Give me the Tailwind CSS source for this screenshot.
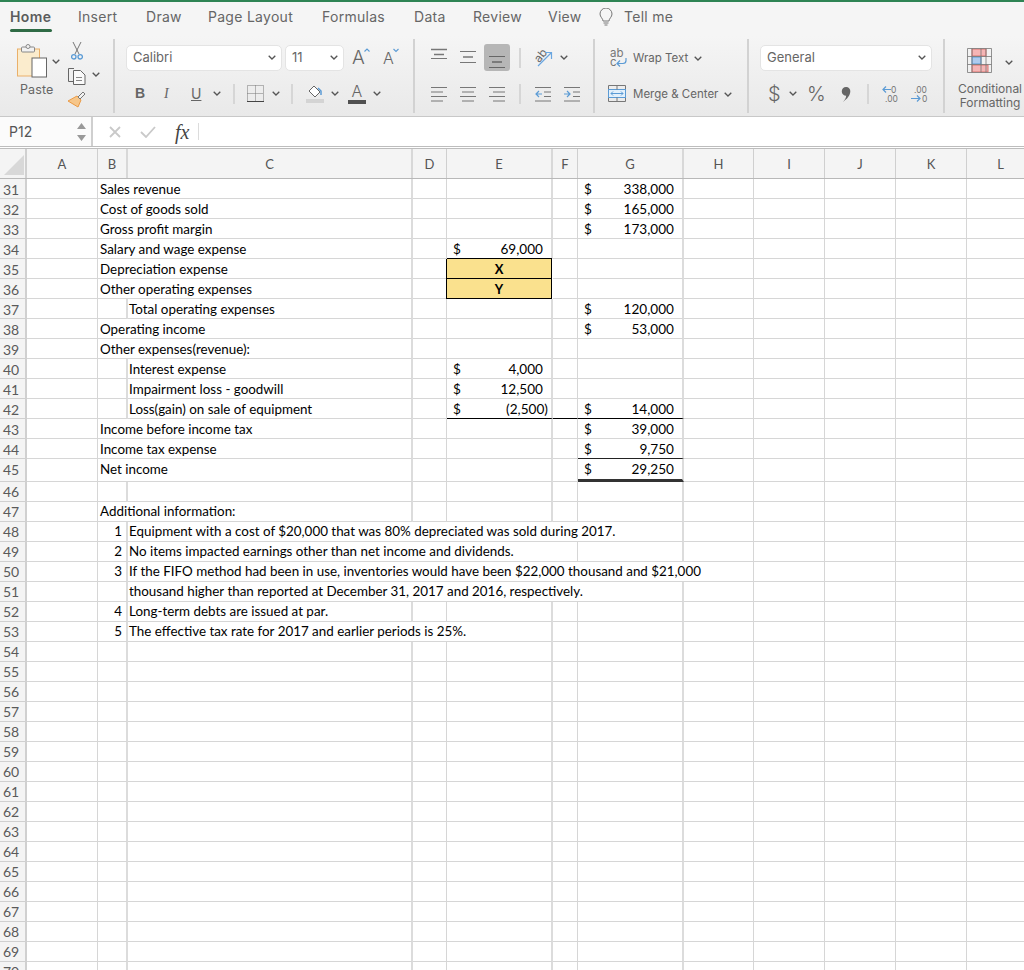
<!DOCTYPE html>
<html lang="en">
<head>
    <meta charset="UTF-8">
    <meta name="viewport" content="width=device-width, initial-scale=1.0">
    <title>Excel - Home</title>
    <script src="https://cdn.jsdelivr.net/npm/@tailwindcss/browser@4"></script>
</head>
<body class="bg-white">
<svg class="hidden">
    <symbol id="chev" viewBox="0 0 8 5"><polyline points="0.7,0.7 4,4 7.3,0.7" fill="none" stroke="#555" stroke-width="1.3"/></symbol>
</svg>
<div class="w-[1024px] h-[970px] overflow-hidden font-[Inter,sans-serif] text-[#666]">
    <div class="h-[2px] bg-[#2e8454]"></div>

    <!-- Tabs -->
    <div class="flex h-[34px] pt-[5px] bg-[#f5f5f5] text-[14px] leading-[20px] tracking-[0.02em]">
        <div class="ml-[10px] w-[42px]">
            <div class="font-semibold text-[#5c5c5c] tracking-[0.03em]">Home</div>
            <div class="mt-[2px] h-[3px] rounded-sm bg-[#2f6b45]"></div>
        </div>
        <div class="ml-[26px] w-[40px]">Insert</div>
        <div class="ml-[28px] w-[36px]">Draw</div>
        <div class="ml-[26px] w-[85px]">Page Layout</div>
        <div class="ml-[29px] w-[63px]">Formulas</div>
        <div class="ml-[29px] w-[32px]">Data</div>
        <div class="ml-[27px] w-[48px]">Review</div>
        <div class="ml-[27px] w-[33px]">View</div>
        <svg class="ml-[17px] mt-[1px]" width="16" height="19" viewBox="0 0 16 19" fill="none" stroke="#777" stroke-width="1"><path d="M5 13c0-2.500-3-4-3-7a6 6 0 0 1 12 0c0 3-3 4.500-3 7z"/><path d="M5.500 15h5M6.500 17h3"/></svg>
        <div class="ml-[10px] w-[50px]">Tell me</div>
    </div>

    <!-- Ribbon -->
    <div class="flex h-[81px] py-[3px] border-b border-[#c8c8c8] bg-gradient-to-b from-[#f5f5f5] to-[#e9e9e9] text-[13px]">
        <!-- Clipboard -->
        <div class="relative w-[115px] border-r-2 border-[#d2d2d2]">
            <svg class="absolute left-[17px] top-[5px]" width="30" height="34" viewBox="0 0 30 34" fill="none">
                <rect x="0.500" y="5" width="22" height="27" fill="#fbeccd" stroke="#eab06a"/>
                <rect x="4.500" y="3" width="13" height="5" rx="1" fill="#f2f2f2" stroke="#888"/>
                <circle cx="11" cy="2.500" r="2" fill="#f2f2f2" stroke="#888"/>
                <rect x="15" y="14" width="14.500" height="19" fill="#fff" stroke="#666"/>
            </svg>
            <svg class="absolute left-[52px] top-[20px] w-[8px] h-[5px]"><use href="#chev"/></svg>
            <div class="absolute left-[20px] top-[42px] text-[12.500px] leading-[18px] tracking-[0.01em]">Paste</div>
            <svg class="absolute left-[71px] top-[3px]" width="12" height="18" viewBox="0 0 12 18" fill="none">
                <path d="M2 0l6 12M10 0L4 12" stroke="#777"/>
                <circle cx="2.800" cy="14.800" r="2.200" stroke="#5b9bd5" stroke-width="1.300"/>
                <circle cx="9.200" cy="14.800" r="2.200" stroke="#5b9bd5" stroke-width="1.300"/>
            </svg>
            <svg class="absolute left-[68px] top-[28px]" width="18" height="18" viewBox="0 0 18 18" fill="none" stroke="#666">
                <path d="M6 1.500H.500v13H5"/>
                <path d="M5.500 3.500h7l4.500 4.500v9.500H5.500z" fill="#fafafa"/>
                <path d="M8 10.500h6M8 13.500h6" stroke="#888"/>
            </svg>
            <svg class="absolute left-[92px] top-[33px] w-[8px] h-[5px]"><use href="#chev"/></svg>
            <svg class="absolute left-[68px] top-[52px]" width="18" height="17" viewBox="0 0 18 17" fill="none">
                <path d="M9 5l4 4-3 7-10-6z" fill="#f6c68a" stroke="#ea9a45"/>
                <path d="M10 6l5-5 2 2-5 5z" fill="#f2f2f2" stroke="#777"/>
            </svg>
        </div>

        <!-- Font -->
        <div class="w-[300px] pt-[5px] border-r-2 border-[#d2d2d2]">
            <div class="flex items-center h-[27px]">
                <div class="ml-[11px] w-[156px] h-[26px] rounded-[5px] bg-white border border-[#e4e4e4] flex items-center justify-between pl-[6px] pr-[5px] text-[13px]">Calibri<svg class="w-[8px] h-[5px]"><use href="#chev"/></svg></div>
                <div class="ml-[3px] w-[59px] h-[26px] rounded-[5px] bg-white border border-[#e4e4e4] flex items-center justify-between pl-[6px] pr-[5px] text-[13px]">11<svg class="w-[8px] h-[5px]"><use href="#chev"/></svg></div>
                <div class="ml-[8px] w-[18px] relative text-[19px] leading-[20px] font-light">A<svg class="absolute left-[12px] top-[0px] w-[6px] h-[4px] overflow-visible" viewBox="0 0 6 4" fill="none" stroke="#5b9bd5" stroke-width="1.100"><path d="M.500 3.500L3 1l2.500 2.500"/></svg></div>
                <div class="ml-[13px] w-[15px] relative text-[16px] leading-[20px] font-light">A<svg class="absolute left-[10px] top-[0px] w-[6px] h-[4px] overflow-visible" viewBox="0 0 6 4" fill="none" stroke="#5b9bd5" stroke-width="1.100"><path d="M.500 1L3 3.500 5.500 1"/></svg></div>
            </div>
            <div class="flex items-center h-[27px] mt-[9px]">
                <div class="ml-[20px] w-[10px] font-bold text-[14px] font-['Liberation_Sans',sans-serif]">B</div>
                <div class="ml-[19px] w-[10px] italic text-[14px] font-['Liberation_Serif',serif]">I</div>
                <div class="ml-[17px] w-[10px] underline text-[14px]">U</div>
                <svg class="ml-[12px] w-[8px] h-[5px]"><use href="#chev"/></svg>
                <div class="ml-[12px] w-[2px] h-[20px] bg-[#d6d6d6]"></div>
                <svg class="ml-[12px]" width="17" height="17" viewBox="0 0 17 17" fill="none" stroke="#777">
                    <path d="M.500.500h16v16h-16z" stroke-dasharray="1 1"/>
                    <path d="M8.500.500v16M.500 8.500h16" stroke-dasharray="1 1"/>
                    <path d="M0 16.500h17" stroke="#444"/>
                </svg>
                <svg class="ml-[8px] w-[8px] h-[5px]"><use href="#chev"/></svg>
                <div class="ml-[11px] w-[2px] h-[20px] bg-[#d6d6d6]"></div>
                <svg class="ml-[13px]" width="18" height="18" viewBox="0 0 18 18" fill="none">
                    <path d="M8 1l6 6-5 5-6-6z" fill="#fff" stroke="#666"/>
                    <path d="M12 3l3 3 0 4" stroke="#5b9bd5" stroke-width="1.500"/>
                    <rect x="0" y="14" width="18" height="4" fill="#d4d4d4"/>
                </svg>
                <svg class="ml-[7px] w-[8px] h-[5px]"><use href="#chev"/></svg>
                <div class="ml-[9px] w-[18px] h-[20px] relative text-center text-[16px] leading-[15px] font-light">A<div class="absolute left-0 right-0 bottom-0 h-[4px] bg-[#505050]"></div></div>
                <svg class="ml-[7px] w-[8px] h-[5px]"><use href="#chev"/></svg>
            </div>
        </div>

        <!-- Alignment -->
        <div class="w-[180px] pt-[5px] border-r-2 border-[#d2d2d2]">
            <div class="flex items-center h-[27px]">
                <svg class="ml-[16px]" width="16" height="27" viewBox="0 0 16 27" stroke="#777"><path d="M0 5.500h16M3 10.500h10" stroke-width="1.500"/><path d="M0 14.500h16"/></svg>
                <svg class="ml-[13px]" width="16" height="27" viewBox="0 0 16 27" stroke="#777"><path d="M0 7.500h16"/><path d="M3 13h10" stroke-width="1.500"/><path d="M0 18.500h16"/></svg>
                <div class="ml-[8px] w-[26px] h-[27px] rounded-[3px] bg-[#b6b6b6] flex justify-center">
                    <svg width="16" height="27" viewBox="0 0 16 27" stroke="#666"><path d="M0 12.500h16"/><path d="M3 18h10" stroke-width="1.500"/><path d="M0 23.500h16"/></svg>
                </div>
                <div class="ml-[9px] w-[2px] h-[20px] bg-[#d6d6d6]"></div>
                <svg class="ml-[13px] overflow-visible" width="19" height="20" viewBox="0 0 19 20" fill="none">
                    <text x="0" y="12" font-size="11.500" fill="#666" font-family="Inter" transform="rotate(-50 6 8)">ab</text>
                    <path d="M4 18L17 5M11 4.500h6.500V11" stroke="#6aa6e0" stroke-width="1.200"/>
                </svg>
                <svg class="ml-[7px] w-[8px] h-[5px]"><use href="#chev"/></svg>
            </div>
            <div class="flex items-center h-[27px] mt-[9px]">
                <svg class="ml-[16px]" width="16" height="16" viewBox="0 0 16 16" stroke="#777"><path d="M0 1.500h16M0 6h12M0 10.500h16M0 15h12"/></svg>
                <svg class="ml-[13px]" width="16" height="16" viewBox="0 0 16 16" stroke="#777"><path d="M0 1.500h16M2 6h12M0 10.500h16M2 15h12"/></svg>
                <svg class="ml-[13px]" width="16" height="16" viewBox="0 0 16 16" stroke="#777"><path d="M0 1.500h16M4 6h12M0 10.500h16M4 15h12"/></svg>
                <div class="ml-[14px] w-[2px] h-[20px] bg-[#d6d6d6]"></div>
                <svg class="ml-[14px]" width="16" height="16" viewBox="0 0 16 16" fill="none"><path d="M0 1.500h16M9 6h7M9 10.500h7M0 15h16" stroke="#777"/><path d="M7 8H1M4 5L1 8l3 3" stroke="#5b9bd5" stroke-width="1.200"/></svg>
                <svg class="ml-[13px]" width="16" height="16" viewBox="0 0 16 16" fill="none"><path d="M0 1.500h16M9 6h7M9 10.500h7M0 15h16" stroke="#777"/><path d="M0 8h6M3 5l3 3-3 3" stroke="#5b9bd5" stroke-width="1.200"/></svg>
            </div>
        </div>

        <!-- Wrap / Merge -->
        <div class="w-[154px] pt-[5px] border-r-2 border-[#d2d2d2] text-[11.500px]">
            <div class="flex items-center h-[27px]">
                <svg class="ml-[15px] overflow-visible" width="17" height="18" viewBox="0 0 17 18" fill="none">
                    <text x="0" y="7.500" font-size="11.500" fill="#777" font-family="Inter">ab</text>
                    <text x="0" y="17" font-size="11.500" fill="#777" font-family="Inter">c</text>
                    <path d="M16 9v2.500a3 3 0 0 1-3 3H7M10 11.500l-3 3 3 3" stroke="#5b9bd5" stroke-width="1.200"/>
                </svg>
                <div class="ml-[6px] mt-[2px]">Wrap Text</div>
                <svg class="ml-[6px] mt-[2px] w-[8px] h-[5px]"><use href="#chev"/></svg>
            </div>
            <div class="flex items-center h-[27px] mt-[9px]">
                <svg class="ml-[13px]" width="18" height="17" viewBox="0 0 18 17" fill="none">
                    <path d="M.500.500h17v16H.500z" stroke="#777"/>
                    <rect x="0.500" y="4.500" width="17" height="8" fill="#e3f0fb" stroke="#5b9bd5"/>
                    <path d="M9 .500v4M9 12.500v4" stroke="#777"/>
                    <path d="M3 8.500h12M5 6.500l-2 2 2 2M13 6.500l2 2-2 2" stroke="#5b9bd5"/>
                </svg>
                <div class="ml-[7px] mt-[2px]">Merge &amp; Center</div>
                <svg class="ml-[6px] mt-[2px] w-[8px] h-[5px]"><use href="#chev"/></svg>
            </div>
        </div>

        <!-- Number -->
        <div class="w-[196px] pt-[5px] border-r-2 border-[#d2d2d2]">
            <div class="flex items-center h-[27px]">
                <div class="ml-[11px] w-[172px] h-[26px] rounded-[5px] bg-white border border-[#e4e4e4] flex items-center justify-between pl-[6px] pr-[5px]">General<svg class="w-[8px] h-[5px]"><use href="#chev"/></svg></div>
            </div>
            <div class="flex items-center h-[27px] mt-[9px]">
                <div class="ml-[19px] w-[10px] text-[20px] leading-[24px] font-light">$</div>
                <svg class="ml-[11px] w-[8px] h-[5px]"><use href="#chev"/></svg>
                <div class="ml-[10px] w-[18px] text-[20px] leading-[24px] font-light">%</div>
                <svg class="ml-[15px]" width="12" height="18" viewBox="0 0 12 18" fill="#666"><path d="M6 2a4 4 0 0 1 4.300 4.300c0 4.300-3.300 7.700-7.300 10.700 1.800-2 3-4 3.200-6.300A4.300 4.300 0 0 1 6 2z"/></svg>
                <div class="ml-[15px] w-[2px] h-[20px] bg-[#d6d6d6]"></div>
                <svg class="ml-[13px]" width="18" height="18" viewBox="0 0 18 18" fill="none">
                    <text x="9" y="7.500" font-size="8.500" fill="#777" font-family="Inter">0</text>
                    <text x="3" y="17" font-size="8.500" fill="#777" font-family="Inter">.00</text>
                    <path d="M9 4.500H1M4 1.500l-3 3 3 3" stroke="#5b9bd5" stroke-width="1.200"/>
                </svg>
                <svg class="ml-[11px]" width="18" height="18" viewBox="0 0 18 18" fill="none">
                    <text x="3" y="7.500" font-size="8.500" fill="#777" font-family="Inter">.00</text>
                    <text x="11" y="17" font-size="8.500" fill="#777" font-family="Inter">0</text>
                    <path d="M0 13.500h9M6 10.500l3 3-3 3" stroke="#5b9bd5" stroke-width="1.200"/>
                </svg>
            </div>
        </div>

        <!-- Conditional formatting -->
        <div class="relative flex-1">
            <svg class="absolute left-[22px] top-[9px]" width="25" height="25" viewBox="0 0 25 25" fill="none">
                <rect x="5" y="1" width="14" height="7" fill="#f5b5b5" stroke="#d9726f"/>
                <rect x="5" y="9" width="9" height="7" fill="#aecbee" stroke="#5b9bd5"/>
                <rect x="5" y="17" width="16" height="7" fill="#f5b5b5" stroke="#d9726f"/>
                <path d="M.500.500h24v24H.500zM.500 8.500h24M.500 16.500h24M5 .500v24M14 .500v24M19 .500v24" stroke="#777" stroke-width="0.800"/>
            </svg>
            <svg class="absolute left-[60px] top-[21px] w-[8px] h-[5px]"><use href="#chev"/></svg>
            <div class="absolute left-[6px] w-[78px] top-[43px] text-center text-[12px] leading-[13.500px]">Conditional<br>Formatting</div>
        </div>
    </div>

    <!-- Formula bar -->
    <div class="flex items-center h-[32px] border-b-[3px] border-double border-[#bdbdbd] bg-white">
        <div class="w-[93px] h-full border-r-2 border-[#cfcfcf] flex items-center justify-between pl-[9px] pr-[5px] text-[14px] text-[#555] bg-[#fbfbfb]">
            P12
            <svg width="9" height="18" viewBox="0 0 9 18" fill="#999"><path d="M4.500 0L9 6H0zM4.500 18L0 12h9z"/></svg>
        </div>
        <svg class="ml-[16px]" width="12" height="12" viewBox="0 0 12 12" stroke="#c9c9c9" stroke-width="1.800"><path d="M1 1l10 10M11 1L1 11"/></svg>
        <svg class="ml-[19px]" width="16" height="12" viewBox="0 0 16 12" fill="none" stroke="#c9c9c9" stroke-width="1.800"><path d="M1 6l5 5L15 1"/></svg>
        <div class="ml-[19px] mt-[1px] w-[23px] italic text-[20px] leading-[20px] text-[#444] font-['Liberation_Serif',serif]">fx</div>
        <div class="w-px h-[17px] bg-[#dcdcdc]"></div>
    </div>

    <!-- Sheet -->
    <div id="sheet" class="font-['Lato',sans-serif] text-[13.400px] leading-[19px] text-black"></div>
</div>

<script>
    var COLS = 'grid grid-cols-[27px_71px_30px_285px_34px_106px_25px_106px_70px_71px_71px_71px_68px]';
    var CELL = 'border-r border-b border-[#d6d6d6] whitespace-nowrap';
    // some column edges are wider and paler in the picture
    var WIDE = 'border-r-2 border-b border-r-[#dcdcdc] border-b-[#d6d6d6] whitespace-nowrap';
    var HEAD = 'border-r border-[#cfcfcf] pt-[1px] text-center text-[13px] leading-[28px] text-[#555]';
    var HEAD_WIDE = 'border-r-2 border-[#d8d8d8] pt-[1px] text-center text-[13px] leading-[28px] text-[#555]';
    var LETTERS = ['A','B','C','D','E','F','G','H','I','J','K','L'];

    var rows = {
        31: { b: 'Sales revenue', g: '338,000' },
        32: { b: 'Cost of goods sold', g: '165,000' },
        33: { b: 'Gross profit margin', g: '173,000' },
        34: { b: 'Salary and wage expense', e: '69,000' },
        35: { b: 'Depreciation expense', box: 'X' },
        36: { b: 'Other operating expenses', box: 'Y' },
        37: { c: 'Total operating expenses', g: '120,000' },
        38: { b: 'Operating income', g: '53,000' },
        39: { b: 'Other expenses(revenue):' },
        40: { c: 'Interest expense', e: '4,000' },
        41: { c: 'Impairment loss - goodwill', e: '12,500' },
        42: { c: 'Loss(gain) on sale of equipment', e: '(2,500)', g: '14,000', line: true },
        43: { b: 'Income before income tax', g: '39,000' },
        44: { b: 'Income tax expense', g: '9,750', gLine: true },
        45: { b: 'Net income', g: '29,250', dbl: true },
        47: { b: 'Additional information:' },
        48: { n: '1', c: 'Equipment with a cost of $20,000 that was 80% depreciated was sold during 2017.', span: 5 },
        49: { n: '2', c: 'No items impacted earnings other than net income and dividends.', span: 4 },
        50: { n: '3', c: 'If the FIFO method had been in use, inventories would have been $22,000 thousand and $21,000', span: 6 },
        51: { c: 'thousand higher than reported at December 31, 2017 and 2016, respectively.', span: 5 },
        52: { n: '4', c: 'Long-term debts are issued at par.' },
        53: { n: '5', c: 'The effective tax rate for 2017 and earlier periods is 25%.', span: 3 }
    };

    var SPANS = { 3: 'col-span-3', 4: 'col-span-4', 5: 'col-span-5', 6: 'col-span-6' };

    function money(val, cls) {
        var pr = val.charAt(0) === '(' ? 'pr-[3px]' : 'pr-[8px]';
        return '<div class="' + WIDE + ' ' + cls + ' flex justify-between pl-[6px] ' + pr + ' text-[13.600px]"><span>$</span><span>' + val + '</span></div>';
    }

    function rowHtml(n, r) {
        var size = n === 45 ? 'h-[23px]' : 'h-[20px]';
        var nudge = n < 46 ? 'leading-[17px] [&>div]:pt-[2px]' : '';
        var h = '<div class="' + COLS + ' ' + size + ' ' + nudge + '">';
        h += '<div class="bg-[#f4f4f4] border-r-2 border-b border-[#d0d0d0] text-center pr-[3px] text-[#5a5a5a] text-[14px]">' + n + '</div>';
        h += '<div class="' + CELL + '"></div>';
        var used = 0;
        if (r.b) {
            h += '<div class="' + WIDE + ' col-span-2 pl-[2px]">' + r.b + '</div>';
        } else {
            h += '<div class="' + WIDE + ' text-right pr-[4px]">' + (r.n || '') + '</div>';
            if (r.c) {
                var edge = (r.span === 4 || r.span === 6) ? CELL : WIDE;
                h += '<div class="' + edge + ' ' + (SPANS[r.span] || '') + ' pl-[1px]">' + r.c + '</div>';
                used = (r.span || 1) - 1;
            } else {
                h += '<div class="' + WIDE + '"></div>';
            }
        }
        // D, E, F, G ... only the ones the long text above does not run over
        var line = r.line ? 'border-b-black!' : '';
        if (used < 1) h += '<div class="' + CELL + '"></div>';
        if (used < 2) {
            if (r.box) {
                h += '<div class="mr-[1px] border-r border-b border-black bg-[#fae18e] shadow-[-1px_0_0_#000,0_-1px_0_#000] text-center font-bold text-[13px]">' + r.box + '</div>';
            } else if (r.e) {
                h += money(r.e, line);
            } else {
                h += '<div class="' + WIDE + '"></div>';
            }
        }
        if (used < 3) h += '<div class="' + CELL + ' ' + line + '"></div>';
        if (used < 4) {
            if (r.g) {
                var gCls = line;
                if (r.gLine) gCls = 'border-b-[#222]!';
                if (r.dbl) gCls = 'border-b-[3px]! [border-bottom-style:double] border-b-[#333]!';
                h += money(r.g, gCls);
            } else {
                h += '<div class="' + WIDE + '"></div>';
            }
        }
        if (used < 5) h += '<div class="' + CELL + '"></div>';
        for (var i = 0; i < 3; i++) h += '<div class="' + CELL + '"></div>';
        h += '<div class="border-b border-[#d6d6d6]"></div>';
        return h + '</div>';
    }

    var html = '<div class="' + COLS + ' h-[30px] bg-[#f4f4f4] border-b border-[#b8b8b8]">';
    html += '<div class="border-r-2 border-[#d0d0d0] pl-[4px] pt-[6px]"><svg width="20" height="20" viewBox="0 0 20 20"><path d="M20 0v20H0z" fill="#d8d8d8"/></svg></div>';
    LETTERS.forEach(function (l, i) {
        var wide = i === 1 || i === 2 || i === 4 || i === 6;
        html += '<div class="' + (wide ? HEAD_WIDE : HEAD) + '">' + l + '</div>';
    });
    html += '</div>';
    for (var n = 31; n <= 70; n++) html += rowHtml(n, rows[n] || {});
    document.getElementById('sheet').innerHTML = html;
</script>
</body>
</html>
